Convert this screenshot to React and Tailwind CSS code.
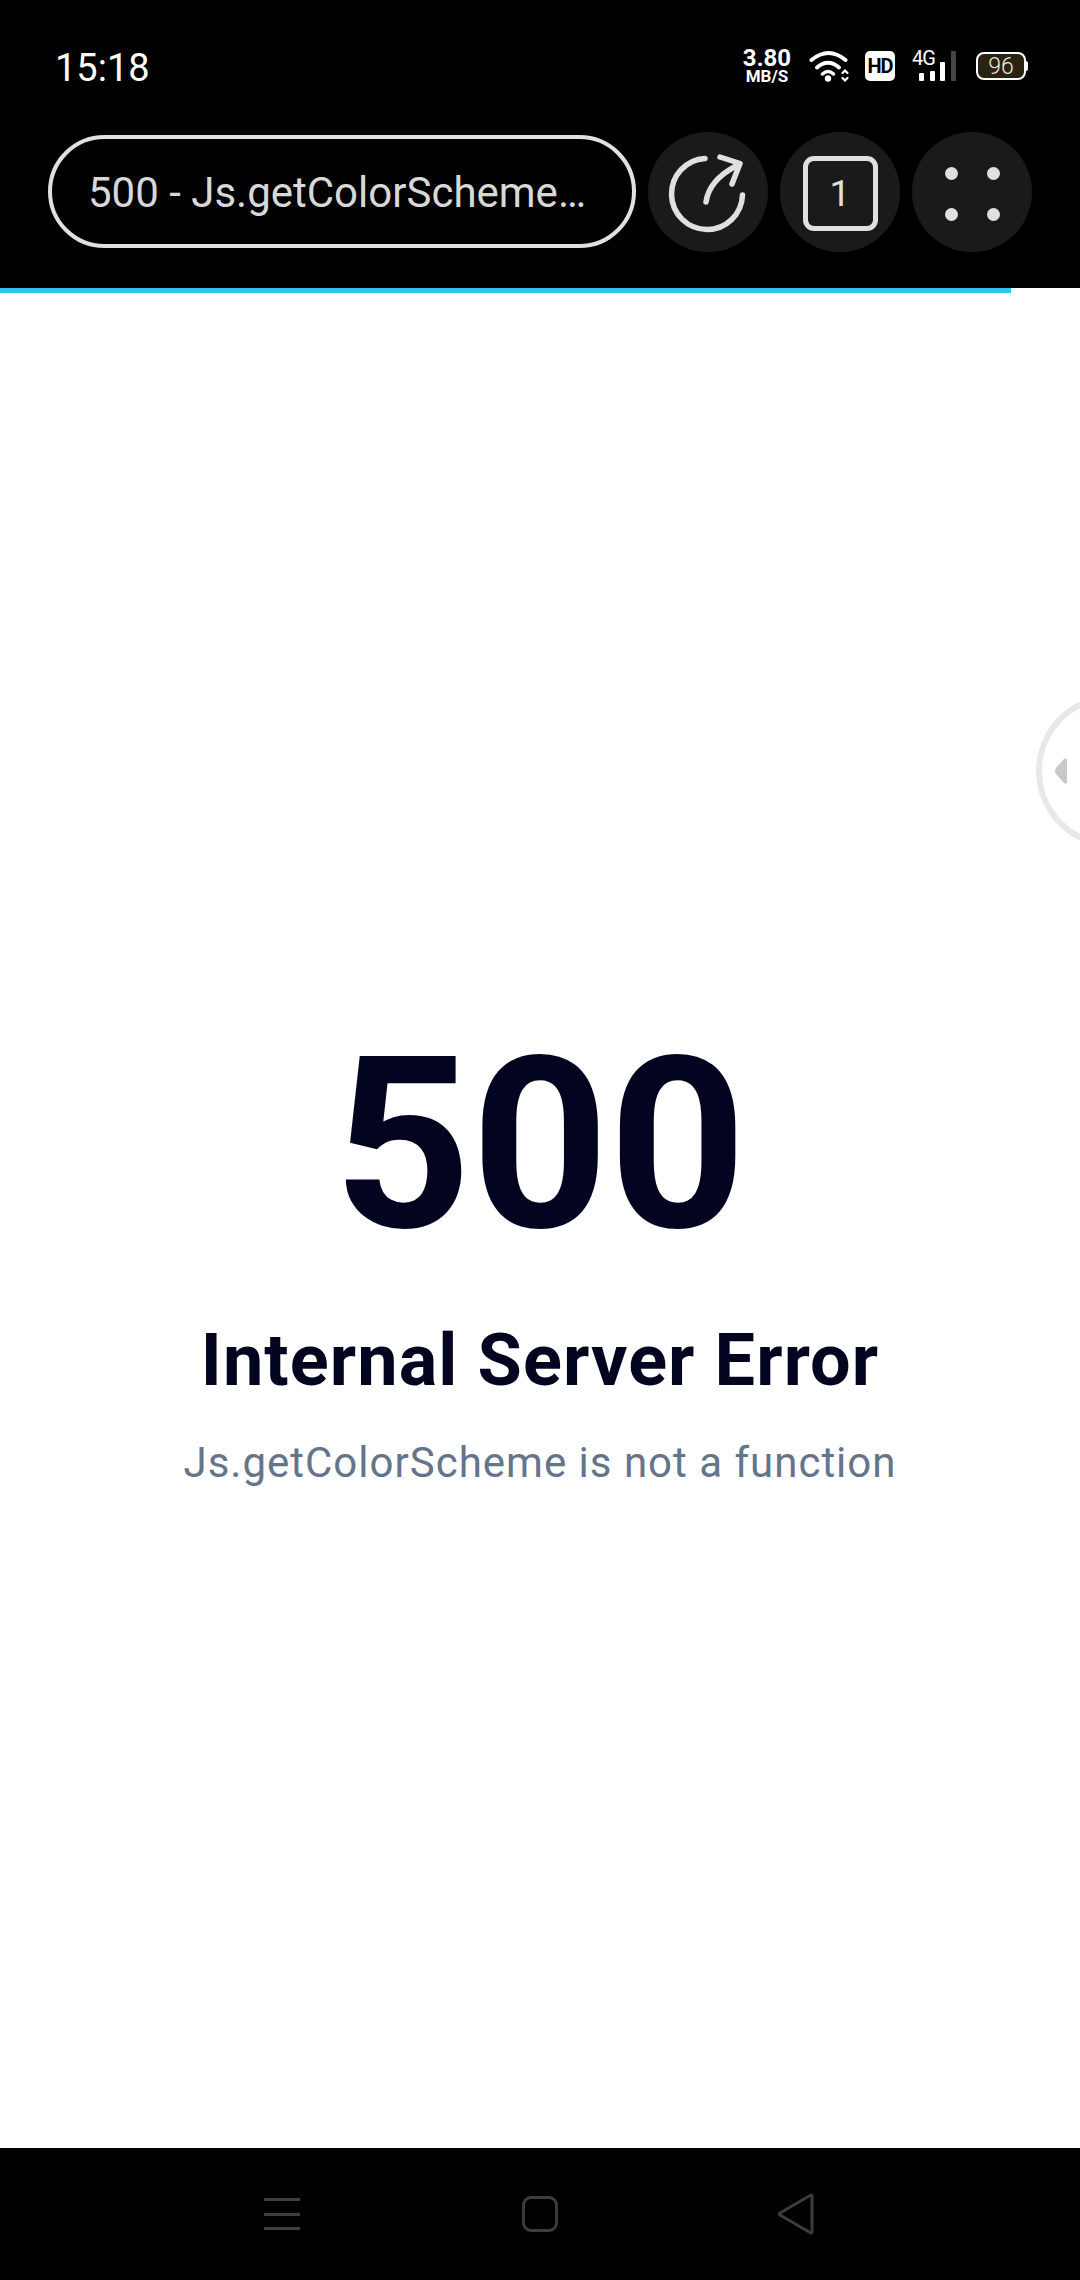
export default function App() {
  return (
    <div className="relative flex h-[2280px] w-[1080px] flex-col overflow-hidden bg-white font-['Roboto',sans-serif]">
      <header className="bg-black">
        <div className="flex h-[95px] items-start pl-[55px] pt-[45px]">
          <span className="mt-[2px] text-[38px] leading-[42px] text-white">15:18</span>
          <div className="ml-auto mr-[52px] flex items-start pt-[4px]">
            <div className="mr-[3px] flex w-[50px] flex-col items-center font-bold text-white">
              <span className="text-[24px] leading-[19px]">3.80</span>
              <span className="mt-[1px] text-[17px] leading-[15px]">MB/S</span>
            </div>
            <svg width="44" height="34" viewBox="0 0 44 34" className="ml-[13px]" fill="none" stroke="#fff" strokeLinecap="round">
              <path d="M3.500 11 Q20.500 -3 37.500 11" strokeWidth="4" />
              <path d="M9 18.500 Q20 9 31 18.500" strokeWidth="4" />
              <path d="M14.500 25 Q20 20 25.500 25" strokeWidth="3.500" />
              <circle cx="20" cy="29.500" r="3.200" fill="#fff" stroke="none" />
              <path d="M34.500 24 L37 21.500 L39.500 24 M34.500 29 L37 31.500 L39.500 29" strokeWidth="2.200" />
            </svg>
            <div className="ml-[13px] mt-[2px] flex h-[30px] w-[30px] items-center justify-center rounded-[5px] bg-white text-[20px] font-bold tracking-[-1px] text-black">HD</div>
            <div className="relative ml-[18px] mt-[2px] flex h-[30px] w-[44px] items-end gap-[5.5px] pl-[6px]">
              <span className="absolute -left-px top-0 text-[20px] leading-[15px] tracking-[-1px] text-white">4G</span>
              <i className="h-[8px] w-[5px] rounded-[1px] bg-white" />
              <i className="h-[10px] w-[5px] rounded-[1px] bg-white" />
              <i className="h-[19px] w-[5px] rounded-[1px] bg-white" />
              <i className="h-[30px] w-[5px] rounded-[1px] bg-[#444]" />
            </div>
            <div className="ml-[19px] mt-[3px] flex items-center">
              <div className="flex h-[28px] w-[50px] items-center justify-center rounded-[8px] border-[2.5px] border-white bg-[#2a2212] text-[23px] font-light leading-none text-[#eee8da]">96</div>
              <i className="h-[10px] w-[2px] rounded-r-[2px] bg-white" />
            </div>
          </div>
        </div>
        <div className="flex h-[193px] items-center pl-[48px]">
          <div className="flex h-[113px] w-[588px] items-center rounded-full border-[4px] border-[#e0e0e0] pl-[36px] text-[42px] text-[#d8d8d8]">
            <span className="mt-[2px]">500 - Js.getColorScheme…</span>
          </div>
          <div className="ml-[12px] flex gap-[12px]">
            <button className="flex h-[120px] w-[120px] items-center justify-center rounded-full bg-[#1a1a1a]">
              <svg width="90" height="90" viewBox="0 0 90 90" className="mt-[3px]" fill="none" stroke="#e0e0e0" strokeWidth="5.500" strokeLinecap="round" strokeLinejoin="round">
                <path d="M42 10.500 A35.500 35.500 0 1 0 79.500 47" />
                <path d="M43 54 C45 40 54 28 73 18" />
                <path d="M57 9 L77 15.500 L69 36" />
              </svg>
            </button>
            <button className="flex h-[120px] w-[120px] items-center justify-center rounded-full bg-[#1a1a1a]">
              <span className="mt-[3px] flex h-[75px] w-[75px] items-center justify-center rounded-[11px] border-[5.5px] border-[#e0e0e0] text-[37px] leading-none text-[#e0e0e0]">1</span>
            </button>
            <button className="grid h-[120px] w-[120px] grid-cols-[13px_13px] content-center justify-center gap-x-[29px] gap-y-[28px] rounded-full bg-[#1a1a1a] pt-[4px]">
              <i className="h-[13px] w-[13px] rounded-full bg-[#e0e0e0]" />
              <i className="h-[13px] w-[13px] rounded-full bg-[#e0e0e0]" />
              <i className="h-[13px] w-[13px] rounded-full bg-[#e0e0e0]" />
              <i className="h-[13px] w-[13px] rounded-full bg-[#e0e0e0]" />
            </button>
          </div>
        </div>
      </header>

      <div className="h-[5px] w-[1011px] bg-[#2bc4ee]" />

      <main className="flex flex-1 flex-col items-center pt-[732px] text-[#020420]">
        <h1 className="text-[240px] font-bold leading-[240px]">500</h1>
        <h2 className="mt-[56px] text-[72px] font-bold leading-[80px] tracking-[1.1px]">Internal Server Error</h2>
        <p className="mt-[34px] text-[42px] leading-[56px] tracking-[1px] text-[#64748b]">Js.getColorScheme is not a function</p>
      </main>

      <nav className="flex h-[132px] items-start bg-black pt-[48px]">
        <div className="ml-[264px] flex h-[34px] w-[36px] flex-col justify-between pt-[2px]">
          <i className="h-[3px] bg-[#3f3f3f]" />
          <i className="h-[3px] bg-[#3f3f3f]" />
          <i className="h-[3px] bg-[#3f3f3f]" />
        </div>
        <div className="ml-[222px] h-[36px] w-[36px] rounded-[9px] border-[3px] border-[#3c3c3c]" />
        <svg width="38" height="42" viewBox="0 0 38 42" className="ml-[219px] -mt-[3px]" fill="none" stroke="#3c3c3c" strokeWidth="3" strokeLinejoin="round">
          <path d="M35 3 Q35 1.500 33 2.500 L3 20 Q1.500 21 3 22 L33 39.500 Q35 40.500 35 39 Z" />
        </svg>
      </nav>

      <div className="absolute left-[1036px] top-[694px] h-[154px] w-[154px] rounded-full border-[6px] border-[#e8e8e8]" />
      <svg width="14" height="28" viewBox="0 0 14 28" className="absolute left-[1054px] top-[757px]" fill="#c8c8c8">
        <path d="M13 3 Q13 0 10 2 L2 11 Q0 14 2 17 L10 26 Q13 28 13 25 Z" />
      </svg>
    </div>
  );
}
